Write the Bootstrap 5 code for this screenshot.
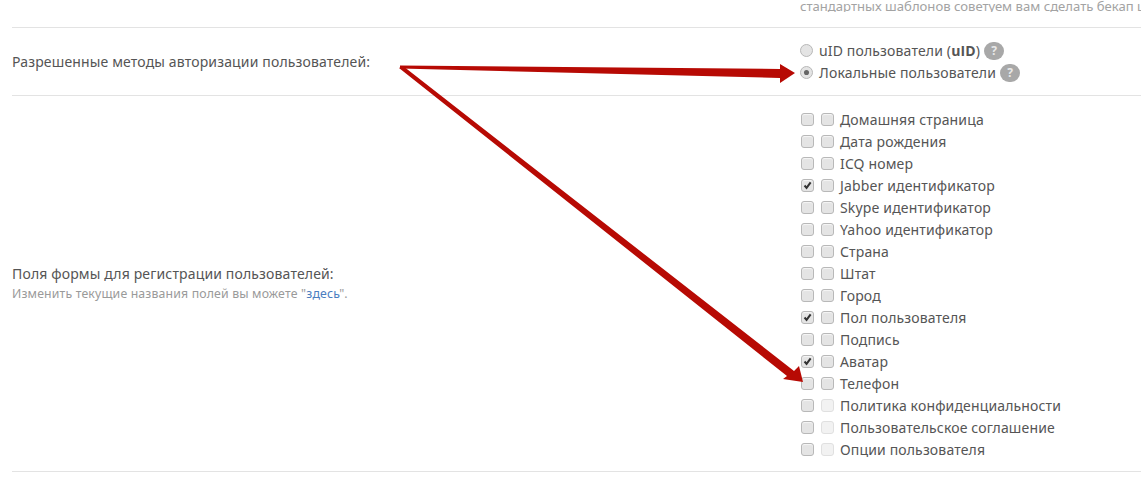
<!DOCTYPE html>
<html lang="en">
<head>
    <meta charset="UTF-8">
    <title>Настройки пользователей</title>
    <link href="https://cdn.jsdelivr.net/npm/bootstrap@5.3.2/dist/css/bootstrap.min.css" rel="stylesheet"/>
    <style>
        html, body { height: 487px; overflow: hidden; }
        body {
            background: #fff;
            color: #555;
            font-family: "Noto Sans", "Open Sans", sans-serif;
            font-size: 14px;
            line-height: 22px;
            letter-spacing: .15px;
        }
        .page-wrap { padding-left: 12px; height: 487px; }
        .top-row { height: 28px; border-bottom: 1px solid #e3e3e3; }
        .top-note {
            margin-left: 788px;
            color: #a3a3a3;
            font-size: 13.1px;
            letter-spacing: 0;
            line-height: 12px;
            white-space: nowrap;
            overflow: hidden;
        }
        .opt-row { border-bottom: 1px solid #e3e3e3; }
        .row-auth { height: 68px; }
        .row-fields { height: 376px; }
        .label-col { width: 789px; flex: none; }
        .row-fields .label-col { margin-top: -2px; }
        .label-hint { font-size: 12.3px; line-height: 18px; color: #9a9a9a; }
        .label-hint a { color: #4a7dc0; text-decoration: none; }
        .field-list { padding-top: 2px; }
        .opt-line { height: 22px; white-space: nowrap; }
        .opt-line b { font-family: "Open Sans", sans-serif; }
        .form-check-input.opt-box {
            width: 13px;
            height: 13px;
            margin: 0 7px 0 0;
            flex: none;
            background-color: #e4e4e4;
            border: 1px solid #b8b8b8;
            border-radius: 3px;
            box-shadow: inset 0 1px 1px #f5f5f5;
            opacity: 1;
        }
        .form-check-input.opt-box + .form-check-input.opt-box { margin-right: 6px; }
        .form-check-input.opt-box:checked {
            background-color: #e4e4e4;
            border-color: #b8b8b8;
            background-image: url("data:image/svg+xml,%3csvg xmlns='http://www.w3.org/2000/svg' viewBox='0 0 13 13'%3e%3cpath fill='none' stroke='%23333' stroke-width='2.4' d='M3 6.5l2.4 2.8 4.8-6.5'/%3e%3c/svg%3e");
        }
        .form-check-input.opt-box:disabled { background-color: #f2f2f2; border-color: #e0e0e0; box-shadow: none; }
        .form-check-input.opt-radio {
            width: 13px;
            height: 13px;
            margin: 0 6px 0 -1px;
            flex: none;
            background-color: #e4e4e4;
            border: 1px solid #b8b8b8;
        }
        .form-check-input.opt-radio:checked {
            background-color: #e4e4e4;
            border-color: #b8b8b8;
            background-image: url("data:image/svg+xml,%3csvg xmlns='http://www.w3.org/2000/svg' viewBox='0 0 13 13'%3e%3ccircle cx='6.5' cy='6.5' r='3' fill='%23666'/%3e%3c/svg%3e");
        }
        .help-dot {
            width: 20px;
            height: 18px;
            margin-left: 4px;
            border-radius: 9px;
            background: #a8a8a8;
            color: #e8e8e8;
            font-size: 12px;
            font-weight: 700;
            line-height: 18px;
            text-align: center;
        }
        .arrows-layer { position: absolute; left: 0; top: 0; pointer-events: none; }
    </style>
</head>
<body>
    <div class="page-wrap">
        <div class="top-row"><div class="top-note">стандартных шаблонов советуем вам сделать бекап шаблонов</div></div>

        <div class="opt-row row-auth d-flex align-items-center">
            <div class="label-col">Разрешенные методы авторизации пользователей:</div>
            <div>
                <div class="opt-line d-flex align-items-center">
                    <input class="form-check-input opt-radio" type="radio" name="auth">
                    <span>uID пользователи (<b>uID</b>)</span><span class="help-dot">?</span>
                </div>
                <div class="opt-line d-flex align-items-center">
                    <input class="form-check-input opt-radio" type="radio" name="auth" checked>
                    <span>Локальные пользователи</span><span class="help-dot">?</span>
                </div>
            </div>
        </div>

        <div class="opt-row row-fields d-flex align-items-center">
            <div class="label-col">
                <div>Поля формы для регистрации пользователей:</div>
                <div class="label-hint">Изменить текущие названия полей вы можете "<a href="#">здесь</a>".</div>
            </div>
            <div id="fieldList" class="field-list"></div>
        </div>
    </div>

    <svg class="arrows-layer" width="1141" height="487" viewBox="0 0 1141 487">
        <path fill="#b70a04" d="M400 65.5 780 69 780 64 795 73 780 83 780 78 400 68.5Z"/>
        <path fill="#b70a04" d="M399 68 403 66 794 371 799 366 803 382 783 379 787 376Z"/>
    </svg>

    <script src="https://cdn.jsdelivr.net/npm/bootstrap@5.3.2/dist/js/bootstrap.bundle.min.js"></script>
    <script>
        // name, first box checked, second box disabled
        const fields = [
            ['Домашняя страница', false, false],
            ['Дата рождения', false, false],
            ['ICQ номер', false, false],
            ['Jabber идентификатор', true, false],
            ['Skype идентификатор', false, false],
            ['Yahoo идентификатор', false, false],
            ['Страна', false, false],
            ['Штат', false, false],
            ['Город', false, false],
            ['Пол пользователя', true, false],
            ['Подпись', false, false],
            ['Аватар', true, false],
            ['Телефон', false, false],
            ['Политика конфиденциальности', false, true],
            ['Пользовательское соглашение', false, true],
            ['Опции пользователя', false, true]
        ];
        var html = '';
        fields.forEach(f => {
            html += `
                <div class="opt-line d-flex align-items-center">
                    <input class="form-check-input opt-box" type="checkbox" ${f[1] ? 'checked' : ''}>
                    <input class="form-check-input opt-box" type="checkbox" ${f[2] ? 'disabled' : ''}>
                    <span>${f[0]}</span>
                </div>`;
        });
        document.getElementById('fieldList').innerHTML = html;
    </script>
</body>
</html>
